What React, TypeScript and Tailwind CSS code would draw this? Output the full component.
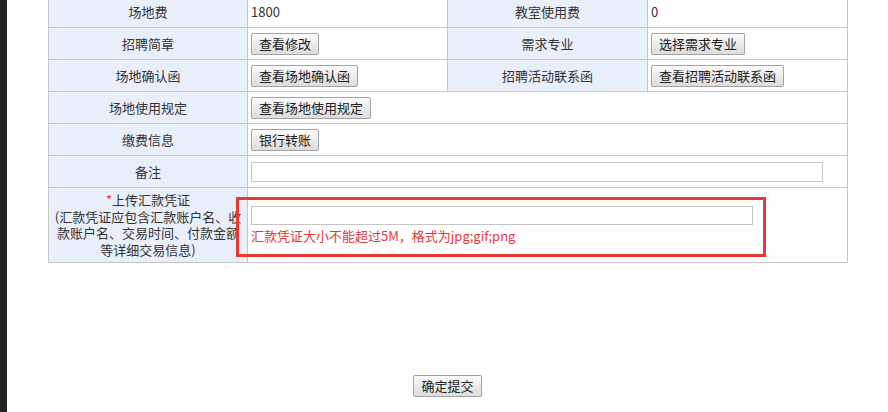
import React from "react";

const Btn = ({ children }: { children: React.ReactNode }) => (
  <button className="h-[22px] px-[7px] border border-[#a3a3a3] rounded-[2px] bg-gradient-to-b from-[#fbfbfb] to-[#dcdcdc] text-[13px] leading-[20px] text-[#222]">
    {children}
  </button>
);

const L1 = "border border-[#c6c6c6] bg-[#e9eefb] text-center text-[13px] text-[#333] w-[199px]";
const L = "border border-[#c6c6c6] bg-[#e9eefb] text-center text-[13px] text-[#333] w-[200px]";
const V = "border border-[#c6c6c6] bg-white text-left text-[13px] text-[#333] pl-[3px] w-[200px]";

export default function App() {
  return (
    <div
      className="flex h-[412px] w-[888px] overflow-hidden bg-white"
      style={{ fontFamily: '"Noto Sans CJK SC", "Microsoft YaHei", sans-serif' }}
    >
      <div className="w-[7px] shrink-0 bg-[#232323]" />
      <div className="flex flex-col pl-[41px]">
        <div className="relative mt-[-5px]">
          <table className="border-collapse w-[799px] table-fixed">
            <colgroup>
              <col className="w-[199px]" />
              <col className="w-[200px]" />
              <col className="w-[200px]" />
              <col className="w-[200px]" />
            </colgroup>
            <tbody>
              <tr className="h-[32px]">
                <td className={L1}>场地费</td>
                <td className={V}>1800</td>
                <td className={L}>教室使用费</td>
                <td className={V}>0</td>
              </tr>
              <tr className="h-[32px]">
                <td className={L1}>招聘简章</td>
                <td className={V}>
                  <Btn>查看修改</Btn>
                </td>
                <td className={L}>需求专业</td>
                <td className={V}>
                  <Btn>选择需求专业</Btn>
                </td>
              </tr>
              <tr className="h-[32px]">
                <td className={L1}>场地确认函</td>
                <td className={V}>
                  <Btn>查看场地确认函</Btn>
                </td>
                <td className={L}>招聘活动联系函</td>
                <td className={V}>
                  <Btn>查看招聘活动联系函</Btn>
                </td>
              </tr>
              <tr className="h-[32px]">
                <td className={L1}>场地使用规定</td>
                <td className={V} colSpan={3}>
                  <Btn>查看场地使用规定</Btn>
                </td>
              </tr>
              <tr className="h-[32px]">
                <td className={L1}>缴费信息</td>
                <td className={V} colSpan={3}>
                  <Btn>银行转账</Btn>
                </td>
              </tr>
              <tr className="h-[32px]">
                <td className={L1}>备注</td>
                <td className={V} colSpan={3}>
                  <div className="h-[20px] w-[572px] border border-[#c4c4c4] bg-white" />
                </td>
              </tr>
              <tr className="h-[75px]">
                <td className={L1 + " leading-[16.5px] px-[2px] whitespace-nowrap"}>
                  <div>
                    <span className="text-[#e53935]">*</span>上传汇款凭证
                  </div>
                  <div>(汇款凭证应包含汇款账户名、收</div>
                  <div>款账户名、交易时间、付款金额</div>
                  <div>等详细交易信息)</div>
                </td>
                <td className={V} colSpan={3}>
                  <div className="h-[19px] w-[502px] border border-[#c4c4c4] bg-white" />
                  <div className="mt-[2px] text-[13px] leading-[18px] text-[#e4393c]">
                    汇款凭证大小不能超过5M，格式为jpg;gif;png
                  </div>
                </td>
              </tr>
            </tbody>
          </table>
          <div className="absolute left-[188px] top-[202px] h-[60px] w-[530px] border-[3px] border-[#e53935] pointer-events-none" />
        </div>
        <div className="mt-[112px] flex w-[799px] justify-center">
          <Btn>确定提交</Btn>
        </div>
      </div>
    </div>
  );
}
